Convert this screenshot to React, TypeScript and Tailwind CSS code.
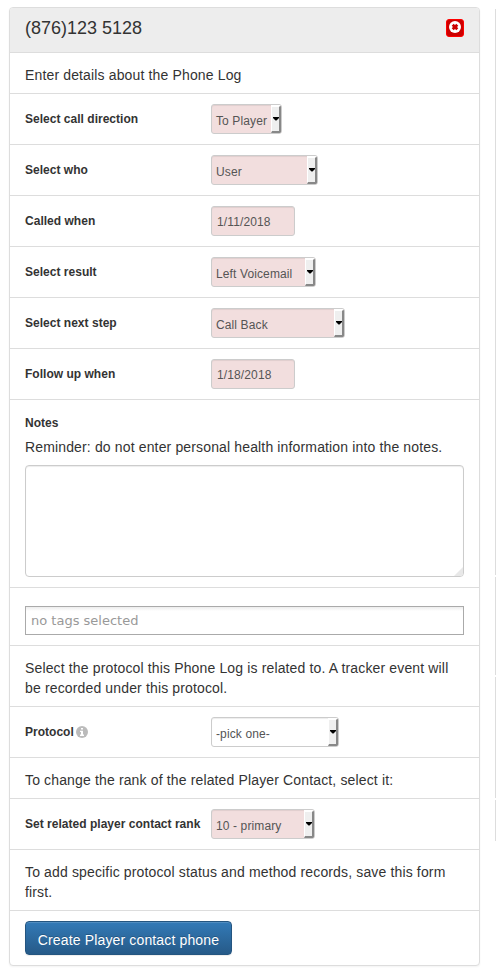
import React from "react";

const rowBase = "border-b border-[#dddddd] px-[15px]";

function TextRow({ children }: { children: React.ReactNode }) {
  return <div className={`${rowBase} pb-[8px] pt-[12px] text-[14px] leading-[20px] tracking-[0.145px]`}>{children}</div>;
}

function FieldRow({ label, children }: { label: React.ReactNode; children: React.ReactNode }) {
  return (
    <div className={`${rowBase} flex h-[51px] items-start pt-[10px]`}>
      <div className="flex w-[186px] shrink-0 items-center whitespace-nowrap pt-[7px] text-[12px] font-bold leading-[17px] tracking-[0.02px]">
        {label}
      </div>
      {children}
    </div>
  );
}

const control =
  "h-[30px] rounded-[3px] border border-[#cccccc] text-[12px] leading-[18px] text-[#555555] shadow-[inset_0_1px_1px_rgba(0,0,0,0.075)]";

function SelectBox({ value, width, plain }: { value: string; width: string; plain?: boolean }) {
  return (
    <div className={`${control} ${width} ${plain ? "bg-white" : "bg-[#f2dede]"} flex overflow-hidden`}>
      <span className="w-0 grow whitespace-nowrap pl-[4px] pt-[7px] tracking-[0.12px]">{value}</span>
      <span className="flex h-[28px] w-[10px] shrink-0 border-b-2 border-l border-r-2 border-t-2 border-b-[#888888] border-l-white border-r-[#888888] border-t-white bg-[#efefef]">
        <svg width="6" height="4" viewBox="0 0 6 4" className="ml-[0.5px] mt-[10px] shrink-0">
          <path d="M0 0h6v1L3.5 3.5h-1L0 1z" fill="#000" />
        </svg>
      </span>
    </div>
  );
}

function DateBox({ value }: { value: string }) {
  return <div className={`${control} w-[84px] bg-[#f2dede] pl-[5px] pt-[6px] tracking-[0.12px]`}>{value}</div>;
}

export default function App() {
  return (
    <div className="flex h-[976px] w-[496px] overflow-hidden bg-white pl-[9px] pt-[7px] font-['Liberation_Sans',Arial,sans-serif] text-[#333333]">
      <div className="h-[959px] w-[471px] shrink-0 overflow-hidden rounded-[4px] border border-[#dddddd] bg-white shadow-[0_1px_2px_rgba(0,0,0,0.05)]">
        <div className="flex h-[45px] justify-between border-b border-[#dddddd] bg-[#ededed] px-[15px] pt-[10px]">
          <h1 className="text-[18px] font-normal leading-[20px]">(876)123 5128</h1>
          <button className="mt-[1px] flex h-[18px] w-[18px] items-center justify-center rounded-[3px] border border-[#ff0000] bg-[#cc0000]">
            <svg width="12" height="12" viewBox="0 0 12 12" className="-mt-[2px]">
              <circle cx="6" cy="6" r="6" fill="#fff" />
              <path d="M3.7 3.7l4.6 4.6M8.3 3.7l-4.6 4.6" stroke="#cc0000" strokeWidth="2.8" />
            </svg>
          </button>
        </div>
        <TextRow>Enter details about the Phone Log</TextRow>
        <FieldRow label="Select call direction"><SelectBox value="To Player" width="w-[71px]" /></FieldRow>
        <FieldRow label="Select who"><SelectBox value="User" width="w-[107px]" /></FieldRow>
        <FieldRow label="Called when"><DateBox value="1/11/2018" /></FieldRow>
        <FieldRow label="Select result"><SelectBox value="Left Voicemail" width="w-[105px]" /></FieldRow>
        <FieldRow label="Select next step"><SelectBox value="Call Back" width="w-[134px]" /></FieldRow>
        <FieldRow label="Follow up when"><DateBox value="1/18/2018" /></FieldRow>
        <div className={`${rowBase} h-[188px] pt-[15px]`}>
          <div className="text-[12px] font-bold leading-[17px]">Notes</div>
          <div className="mt-[5px] text-[14px] leading-[20px] tracking-[0.145px]">
            Reminder: do not enter personal health information into the notes.
          </div>
          <div className="mt-[8px] flex h-[112px] items-end justify-end overflow-hidden rounded-[4px] border border-[#cccccc] shadow-[inset_0_1px_1px_rgba(0,0,0,0.075)]">
            <svg width="9" height="9" viewBox="0 0 9 9">
              <path d="M9 0v9H0z" fill="#e8e8e8" />
            </svg>
          </div>
        </div>
        <div className={`${rowBase} h-[58px] pt-[18px]`}>
          <div className="h-[29px] border border-[#aaaaaa] bg-[linear-gradient(#eeeeee_1%,#ffffff_15%)] pl-[5px] pt-[5px] font-['DejaVu_Sans',sans-serif] text-[13px] leading-[18px] text-[#999999]">
            no tags selected
          </div>
        </div>
        <TextRow>Select the protocol this Phone Log is related to. A tracker event will be recorded under this protocol.</TextRow>
        <FieldRow
          label={
            <>
              Protocol
              <svg width="12" height="12" viewBox="0 0 12 12" className="ml-[2px] mt-[-2px]">
                <circle cx="6" cy="6" r="6" fill="#bbbbbb" />
                <path d="M5 2h2v1.5H5zM4 4.7h3V8.5h1V10H4V8.5h1V6H4z" fill="#fff" />
              </svg>
            </>
          }
        >
          <SelectBox value="-pick one-" width="w-[128px]" plain />
        </FieldRow>
        <TextRow>To change the rank of the related Player Contact, select it:</TextRow>
        <FieldRow label="Set related player contact rank"><SelectBox value="10 - primary" width="w-[104px]" /></FieldRow>
        <TextRow>To add specific protocol status and method records, save this form first.</TextRow>
        <div className="px-[15px] pt-[10px]">
          <button className="flex h-[34px] w-[207px] items-center justify-center whitespace-nowrap rounded-[4px] border border-[#245580] bg-[linear-gradient(#337ab7,#265a88)] pt-[3px] text-[14px] leading-[20px] tracking-[0.145px] text-white shadow-[inset_0_1px_0_rgba(255,255,255,0.15),0_1px_1px_rgba(0,0,0,0.075)] [text-shadow:0_-1px_0_rgba(0,0,0,0.2)]">
            Create Player contact phone
          </button>
        </div>
      </div>
      <div className="ml-[15px] flex w-px shrink-0 flex-col gap-[2px] pt-[2px] *:bg-[#dddddd]">
        <div className="h-[566px]" />
        <div className="h-[98px]" />
        <div className="h-[121px]" />
        <div className="h-[41px]" />
      </div>
    </div>
  );
}
